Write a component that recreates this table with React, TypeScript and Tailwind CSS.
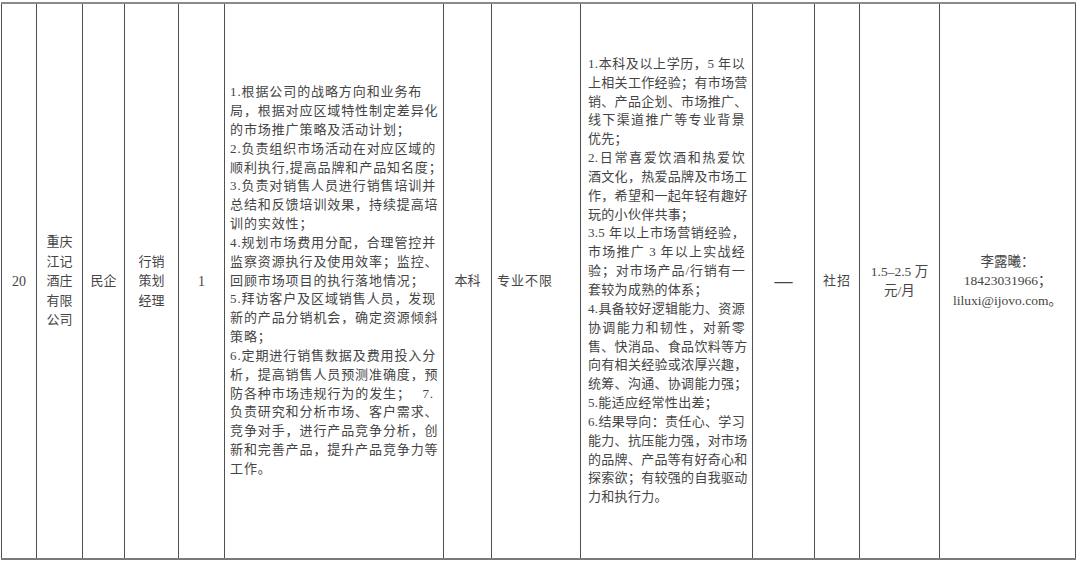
import React from "react";

type Line = { t: string; full?: boolean };

const duties: Line[] = [
  { t: "1.根据公司的战略方向和业务布" },
  { t: "局，根据对应区域特性制定差异化", full: true },
  { t: "的市场推广策略及活动计划；" },
  { t: "2.负责组织市场活动在对应区域的", full: true },
  { t: "顺利执行,提高品牌和产品知名度；", full: true },
  { t: "3.负责对销售人员进行销售培训并", full: true },
  { t: "总结和反馈培训效果，持续提高培", full: true },
  { t: "训的实效性；" },
  { t: "4.规划市场费用分配，合理管控并", full: true },
  { t: "监察资源执行及使用效率；监控、", full: true },
  { t: "回顾市场项目的执行落地情况；" },
  { t: "5.拜访客户及区域销售人员，发现", full: true },
  { t: "新的产品分销机会，确定资源倾斜", full: true },
  { t: "策略；" },
  { t: "6.定期进行销售数据及费用投入分", full: true },
  { t: "析，提高销售人员预测准确度，预", full: true },
  { t: "防各种市场违规行为的发生；　 7.", full: true },
  { t: "负责研究和分析市场、客户需求、", full: true },
  { t: "竞争对手，进行产品竞争分析，创", full: true },
  { t: "新和完善产品，提升产品竞争力等", full: true },
  { t: "工作。" },
];

const reqs: Line[] = [
  { t: "1.本科及以上学历，5 年以", full: true },
  { t: "上相关工作经验；有市场营", full: true },
  { t: "销、产品企划、市场推广、", full: true },
  { t: "线下渠道推广等专业背景", full: true },
  { t: "优先；" },
  { t: "2.日常喜爱饮酒和热爱饮", full: true },
  { t: "酒文化，热爱品牌及市场工", full: true },
  { t: "作，希望和一起年轻有趣好", full: true },
  { t: "玩的小伙伴共事；" },
  { t: "3.5 年以上市场营销经验，", full: true },
  { t: "市场推广 3 年以上实战经", full: true },
  { t: "验；对市场产品/行销有一", full: true },
  { t: "套较为成熟的体系；" },
  { t: "4.具备较好逻辑能力、资源", full: true },
  { t: "协调能力和韧性，对新零", full: true },
  { t: "售、快消品、食品饮料等方", full: true },
  { t: "向有相关经验或浓厚兴趣，", full: true },
  { t: "统筹、沟通、协调能力强；", full: true },
  { t: "5.能适应经常性出差；" },
  { t: "6.结果导向：责任心、学习", full: true },
  { t: "能力、抗压能力强，对市场", full: true },
  { t: "的品牌、产品等有好奇心和", full: true },
  { t: "探索欲；有较强的自我驱动", full: true },
  { t: "力和执行力。" },
];

function Lines({ lines }: { lines: Line[] }) {
  return (
    <div className="leading-[18.85px]">
      {lines.map((l, i) => (
        <div
          key={i}
          className={
            l.full
              ? "whitespace-pre text-justify [text-align-last:justify]"
              : "whitespace-pre text-left"
          }
        >
          {l.t}
        </div>
      ))}
    </div>
  );
}

function Stack({ items }: { items: string[] }) {
  return (
    <div className="flex flex-col items-center leading-[19.5px]">
      {items.map((s, i) => (
        <span key={i}>{s}</span>
      ))}
    </div>
  );
}

export default function App() {
  const cell = "border border-[#505050] align-middle p-0";
  return (
    <div className="w-[1080px] h-[562px] bg-white pt-[2px] overflow-hidden text-[#454545] text-[13px] font-['Liberation_Serif','Noto_Sans_CJK_SC',serif]">
      <table className="table-fixed border-collapse w-[1075px] h-[558px] ml-[1px] border-t-2 border-t-[#8a8a8a] border-b-2 border-b-[#7a7a7a]">
        <colgroup>
          <col className="w-[35px]" />
          <col className="w-[46px]" />
          <col className="w-[42px]" />
          <col className="w-[54px]" />
          <col className="w-[46px]" />
          <col className="w-[219px]" />
          <col className="w-[48px]" />
          <col className="w-[89px]" />
          <col className="w-[172px]" />
          <col className="w-[62px]" />
          <col className="w-[45px]" />
          <col className="w-[80px]" />
          <col className="w-[136px]" />
        </colgroup>
        <tbody>
          <tr>
            <td className={`${cell} text-center text-[14px]`}>20</td>
            <td className={cell}>
              <Stack items={["重庆", "江记", "酒庄", "有限", "公司"]} />
            </td>
            <td className={`${cell} text-center`}>民企</td>
            <td className={cell}>
              <Stack items={["行销", "策划", "经理"]} />
            </td>
            <td className={`${cell} text-center text-[14px]`}>1</td>
            <td className={`${cell} pl-[5px] pr-[9px] tracking-[0.9px]`}>
              <Lines lines={duties} />
            </td>
            <td className={`${cell} text-center`}>本科</td>
            <td className={`${cell} pl-[5px] tracking-[1px]`}>专业不限</td>
            <td className={`${cell} pl-[7px] pr-[7px] tracking-[0.3px]`}>
              <Lines lines={reqs} />
            </td>
            <td className={`${cell} text-center text-[18px] font-bold`}>—</td>
            <td className={`${cell} text-center tracking-[1px]`}>社招</td>
            <td className={cell}>
              <div className="flex flex-col items-center leading-[19px] text-[13.5px]">
                <span>1.5–2.5 万</span>
                <span>元/月</span>
              </div>
            </td>
            <td className={cell}>
              <div className="flex flex-col items-center leading-[19.5px] text-[13.5px]">
                <span>李露曦：</span>
                <span>18423031966；</span>
                <span>liluxi@ijovo.com。</span>
              </div>
            </td>
          </tr>
        </tbody>
      </table>
    </div>
  );
}
